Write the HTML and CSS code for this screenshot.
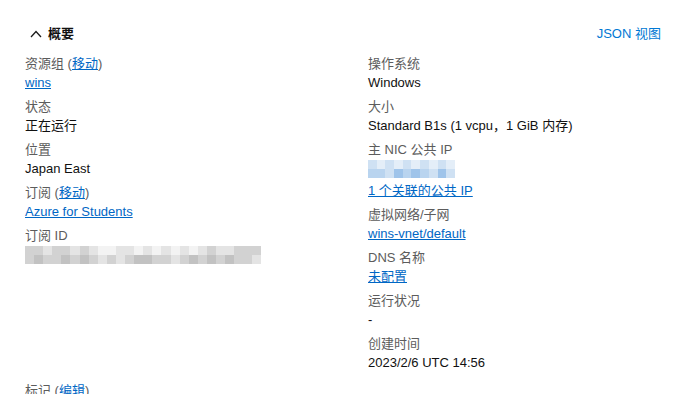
FILE: index.html
```html
<!DOCTYPE html>
<html lang="zh-CN">
  <head>
    <meta charset="UTF-8" />
    <meta name="viewport" content="width=device-width, initial-scale=1.0" />
    <title>概要</title>
    <link rel="stylesheet" href="styles.css">
  </head>
  <body>
    <div class="essentials-header">
      <button class="toggle">
        <svg class="chevron" width="12" height="8" viewBox="0 0 12 8">
          <path d="M1 7 L6 1.5 L11 7" fill="none" stroke="#1b1b1b" stroke-width="1.3" />
        </svg>
        <span>概要</span>
      </button>
      <a class="json-view" href="#">JSON 视图</a>
    </div>

    <div class="essentials">
      <div class="column">
        <div class="prop">
          <div class="label">资源组 (<a href="#">移动</a>)</div>
          <div class="value"><a href="#">wins</a></div>
        </div>
        <div class="prop">
          <div class="label">状态</div>
          <div class="value">正在运行</div>
        </div>
        <div class="prop">
          <div class="label">位置</div>
          <div class="value">Japan East</div>
        </div>
        <div class="prop">
          <div class="label">订阅 (<a href="#">移动</a>)</div>
          <div class="value"><a href="#">Azure for Students</a></div>
        </div>
        <div class="prop">
          <div class="label">订阅 ID</div>
          <div class="redacted gray">
            <div class="row">
              <span class="c2"></span><span class="c2"></span><span class="c1"></span><span class="c2"></span><span class="c2"></span><span class="c1"></span><span class="c2"></span><span class="c1"></span><span class="c0"></span><span class="c0"></span><span class="c1"></span><span class="c1"></span><span class="c0"></span><span class="c1"></span><span class="c0"></span><span class="c1"></span><span class="c0"></span><span class="c1"></span><span class="c0"></span><span class="c1"></span><span class="c2"></span><span class="c1"></span><span class="c1"></span><span class="c2"></span><span class="c2"></span><span class="c2"></span>
            </div>
            <div class="row">
              <span class="c2"></span><span class="c3"></span><span class="c2"></span><span class="c2"></span><span class="c3"></span><span class="c2"></span><span class="c3"></span><span class="c2"></span><span class="c1"></span><span class="c2"></span><span class="c1"></span><span class="c2"></span><span class="c3"></span><span class="c3"></span><span class="c2"></span><span class="c2"></span><span class="c1"></span><span class="c2"></span><span class="c3"></span><span class="c2"></span><span class="c3"></span><span class="c2"></span><span class="c3"></span><span class="c2"></span><span class="c2"></span><span class="c1"></span>
            </div>
          </div>
        </div>
      </div>

      <div class="column">
        <div class="prop">
          <div class="label">操作系统</div>
          <div class="value">Windows</div>
        </div>
        <div class="prop">
          <div class="label">大小</div>
          <div class="value">Standard B1s (1 vcpu，1 GiB 内存)</div>
        </div>
        <div class="prop">
          <div class="label">主 NIC 公共 IP</div>
          <div class="redacted blue">
            <div class="row">
              <span class="c1"></span><span class="c0"></span><span class="c1"></span><span class="c0"></span><span class="c1"></span><span class="c0"></span><span class="c1"></span><span class="c0"></span><span class="c1"></span><span class="c0"></span>
            </div>
            <div class="row">
              <span class="c2"></span><span class="c2"></span><span class="c1"></span><span class="c3"></span><span class="c2"></span><span class="c3"></span><span class="c2"></span><span class="c1"></span><span class="c3"></span><span class="c1"></span>
            </div>
          </div>
          <div class="value extra"><a href="#">1 个关联的公共 IP</a></div>
        </div>
        <div class="prop">
          <div class="label">虚拟网络/子网</div>
          <div class="value"><a href="#">wins-vnet/default</a></div>
        </div>
        <div class="prop">
          <div class="label">DNS 名称</div>
          <div class="value"><a href="#">未配置</a></div>
        </div>
        <div class="prop">
          <div class="label">运行状况</div>
          <div class="value">-</div>
        </div>
        <div class="prop">
          <div class="label">创建时间</div>
          <div class="value">2023/2/6 UTC 14:56</div>
        </div>
      </div>
    </div>

    <div class="tags">
      <div class="label">标记 (<a href="#">编辑</a>)</div>
    </div>
  </body>
</html>
```

FILE: styles.css
```css
body {
  margin: 0;
  font-family: 'Liberation Sans', 'Noto Sans CJK SC', sans-serif;
  font-size: 13px;
  line-height: 19px;
  color: #111;
  background: #fff;
}

a {
  color: #0067c5;
  text-decoration: underline;
}

.essentials-header {
  display: flex;
  justify-content: space-between;
  align-items: center;
  padding: 24px 29px 0 30px;
}

.toggle {
  display: flex;
  align-items: center;
  gap: 6px;
  padding: 0;
  border: none;
  background: none;
  font: inherit;
  font-weight: bold;
  color: #111;
}

.chevron {
  display: block;
}

.json-view {
  color: #0078d4;
  text-decoration: none;
}

.essentials {
  display: grid;
  grid-template-columns: 343px 1fr;
  padding: 11px 25px 0 25px;
}

.prop {
  margin-bottom: 5px;
}

.label {
  color: #5c5c5c;
}

.value {
  color: #111;
}

.value.extra {
  margin-top: 3px;
}

.redacted {
  display: flex;
  flex-direction: column;
  margin-top: 1px;
}

.redacted .row {
  display: flex;
}

.redacted span {
  display: block;
  width: 9.1px;
  height: 9px;
}

.redacted.blue span {
  width: 8.7px;
}

.gray .c0 { background: #f3f3f3; }
.gray .c1 { background: #e4e4e4; }
.gray .c2 { background: #d2d2d2; }
.gray .c3 { background: #c2c2c2; }

.blue .c0 { background: #e4eef8; }
.blue .c1 { background: #cfe1f3; }
.blue .c2 { background: #b9d4ef; }
.blue .c3 { background: #9fc4ea; }

.tags {
  padding: 4px 25px 0;
}
```
